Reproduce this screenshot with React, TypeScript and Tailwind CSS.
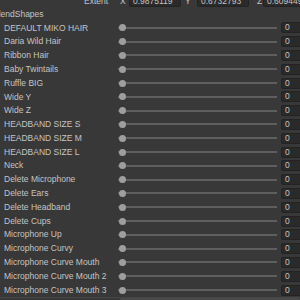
const ROWS = [
  "DEFAULT MIKO HAIR",
  "Daria Wild Hair",
  "Ribbon Hair",
  "Baby Twintails",
  "Ruffle BIG",
  "Wide Y",
  "Wide Z",
  "HEADBAND SIZE S",
  "HEADBAND SIZE M",
  "HEADBAND SIZE L",
  "Neck",
  "Delete Microphone",
  "Delete Ears",
  "Delete Headband",
  "Delete Cups",
  "Microphone Up",
  "Microphone Curvy",
  "Microphone Curve Mouth",
  "Microphone Curve Mouth 2",
  "Microphone Curve Mouth 3",
];

function Field({ value, className }: { value: string; className: string }) {
  return (
    <div className={`h-[11px] rounded-[2px] bg-[#2a2a2a] border border-[#232323] pl-[3px] text-[8.5px] leading-[9px] text-[#c4c4c4] overflow-hidden whitespace-nowrap ${className}`}>
      {value}
    </div>
  );
}

function SliderRow({ label }: { label: string }) {
  return (
    <div className="flex h-[13.8px] items-center">
      <div className="w-[118px] shrink-0 pl-[4px] whitespace-nowrap text-[8.5px] text-[#c4c4c4]">{label}</div>
      <div className="relative flex h-full w-[159px] shrink-0 items-center">
        <div className="h-[2px] w-full bg-[#5e5e5e]" />
        <div className="absolute left-[0.5px] h-[7px] w-[7px] rounded-full bg-[#9e9e9e]" />
      </div>
      <Field value="0" className="ml-[4px] w-[30px] shrink-0" />
    </div>
  );
}

export default function App() {
  return (
    <div className="h-[300px] w-[300px] overflow-hidden bg-[#383838] font-['Liberation_Sans',Arial,sans-serif]">
      <div className="-mt-[5px] flex h-[12px] items-center text-[8.5px] text-[#c4c4c4] whitespace-nowrap">
        <span className="ml-[84px] w-[36px] shrink-0">Extent</span>
        <span className="w-[9px] shrink-0">X</span>
        <Field value="0.9875119" className="w-[52px] shrink-0" />
        <span className="ml-[4px] w-[12px] shrink-0">Y</span>
        <Field value="0.6732793" className="w-[52px] shrink-0" />
        <span className="ml-[8px] w-[6px] shrink-0">Z</span>
        <Field value="0.6094493" className="w-[50px] shrink-0" />
      </div>
      <div className="-ml-[7px] flex h-[14px] items-center text-[8.5px] text-[#c4c4c4]">BlendShapes</div>
      {ROWS.map((r) => (
        <SliderRow key={r} label={r} />
      ))}
      <div className="flex h-[12px] items-start border-t border-[#454545]">
        <span className="ml-[10px] w-[110px] shrink-0 text-[8.5px] text-[#c4c4c4]">Q</span>
        <div className="h-[12px] w-[180px] shrink-0 rounded-[2px] bg-[#4a4a4a] pl-[3px] text-[8.5px] text-[#c4c4c4]">I</div>
      </div>
    </div>
  );
}
